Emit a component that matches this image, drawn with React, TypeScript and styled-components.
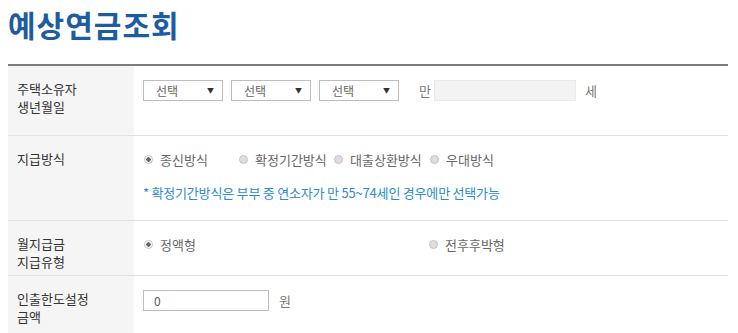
import React from "react";
import styled, { createGlobalStyle } from "styled-components";

const Global = createGlobalStyle`
  html, body { margin: 0; padding: 0; background: #fff; }
  body {
    padding: 8px;
    font-family: "Noto Sans CJK KR", "Noto Sans", sans-serif;
    color: #333;
  }
`;

const Title = styled.h1`
  margin: 0;
  font-size: 30px;
  line-height: 32px;
  font-weight: 700;
  color: #1c5c9f;
  letter-spacing: 1px;
`;

const Table = styled.div`
  margin-top: 24px;
  width: 720px;
  border-top: 2px solid #7d7d7d;
  display: grid;
  grid-template-columns: 126px 1fr;
`;

const Label = styled.div<{ $h: number }>`
  height: ${(p) => p.$h}px;
  box-sizing: border-box;
  background: #f5f5f5;
  border-bottom: 1px solid #e2e2e2;
  padding: 14px 9px 0;
  font-size: 13px;
  line-height: 18px;
  color: #333;
`;

const Cell = styled.div<{ $h: number }>`
  height: ${(p) => p.$h}px;
  box-sizing: border-box;
  border-bottom: 1px solid #e2e2e2;
  padding: 14px 9px 0;
  font-size: 13px;
  line-height: 19px;
  color: #666;
`;

const Line = styled.div`
  display: flex;
  align-items: center;
`;

const Selects = styled.div`
  display: flex;
  gap: 8px;
`;

const Select = styled.div`
  width: 80px;
  height: 21px;
  box-sizing: border-box;
  border: 1px solid #bdbdbd;
  background: #fff;
  display: flex;
  align-items: center;
  justify-content: space-between;
  padding: 0 8px 0 12px;
  font-size: 12px;
  color: #666;
`;

const Arrow = styled.span`
  font-size: 7px;
  color: #333;
  line-height: 1;
`;

const Unit = styled.span<{ $ml?: number; $mr?: number }>`
  margin-left: ${(p) => p.$ml ?? 0}px;
  margin-right: ${(p) => p.$mr ?? 0}px;
  font-size: 13px;
  color: #777;
`;

const TextBox = styled.div<{ $w: number; $disabled?: boolean }>`
  width: ${(p) => p.$w}px;
  height: 21px;
  box-sizing: border-box;
  border: 1px solid ${(p) => (p.$disabled ? "#ebebeb" : "#bdbdbd")};
  background: ${(p) => (p.$disabled ? "#f3f3f3" : "#fff")};
  padding: 0 10px;
  display: flex;
  align-items: center;
  font-size: 12px;
  color: #555;
`;

const Options = styled.div`
  display: flex;
  align-items: center;
`;

const Option = styled.label<{ $w: number }>`
  width: ${(p) => p.$w}px;
  display: flex;
  align-items: center;
  gap: 7px;
  font-size: 13px;
  color: #666;
  white-space: nowrap;
`;

const Dot = styled.span<{ $on?: boolean }>`
  width: 9px;
  height: 9px;
  margin-left: 1px;
  border-radius: 50%;
  box-sizing: border-box;
  border: 1px solid #c4c4c4;
  background: ${(p) =>
    p.$on
      ? "radial-gradient(circle, #666 0 2px, #fff 2.4px)"
      : "#dedede"};
  flex: none;
`;

const Note = styled.p`
  margin: 14px 0 0;
  font-size: 13px;
  line-height: 19px;
  color: #2a8bd0;
  letter-spacing: -0.2px;
`;

const Radio = ({ on, w, children }: { on?: boolean; w: number; children: React.ReactNode }) => (
  <Option $w={w}>
    <Dot $on={on} />
    {children}
  </Option>
);

export default function App() {
  return (
    <>
      <Global />
      <Title>예상연금조회</Title>
      <Table>
        <Label $h={70}>
          주택소유자
          <br />
          생년월일
        </Label>
        <Cell $h={70}>
          <Line>
            <Selects>
              {["선택", "선택", "선택"].map((t, i) => (
                <Select key={i}>
                  {t}
                  <Arrow>▼</Arrow>
                </Select>
              ))}
            </Selects>
            <Unit $ml={20} $mr={3}>만</Unit>
            <TextBox $w={142} $disabled />
            <Unit $ml={9}>세</Unit>
          </Line>
        </Cell>

        <Label $h={85}>지급방식</Label>
        <Cell $h={85}>
          <Options>
            <Radio on w={95}>종신방식</Radio>
            <Radio w={95}>확정기간방식</Radio>
            <Radio w={96}>대출상환방식</Radio>
            <Radio w={95}>우대방식</Radio>
          </Options>
          <Note>* 확정기간방식은 부부 중 연소자가 만 55~74세인 경우에만 선택가능</Note>
        </Cell>

        <Label $h={55}>
          월지급금
          <br />
          지급유형
        </Label>
        <Cell $h={55}>
          <Options>
            <Radio on w={285}>정액형</Radio>
            <Radio w={120}>전후후박형</Radio>
          </Options>
        </Cell>

        <Label $h={60}>
          인출한도설정
          <br />
          금액
        </Label>
        <Cell $h={60}>
          <Line>
            <TextBox $w={126}>0</TextBox>
            <Unit $ml={10}>원</Unit>
          </Line>
        </Cell>
      </Table>
    </>
  );
}
